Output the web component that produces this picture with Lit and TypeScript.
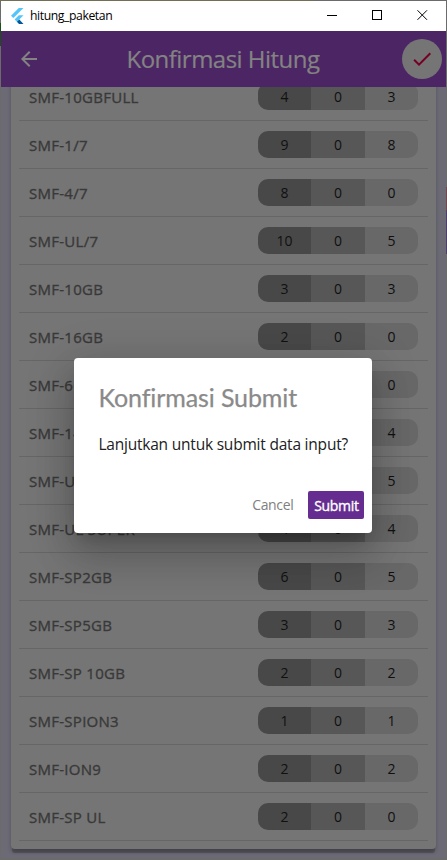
import { LitElement, html, css } from "lit";
import { customElement, property } from "lit/decorators.js";

type Item = [string, number, number, number];

const ITEMS: Item[] = [
  ["SMF-10GBFULL", 4, 0, 3],
  ["SMF-1/7", 9, 0, 8],
  ["SMF-4/7", 8, 0, 0],
  ["SMF-UL/7", 10, 0, 5],
  ["SMF-10GB", 3, 0, 3],
  ["SMF-16GB", 2, 0, 0],
  ["SMF-6GB", 2, 0, 0],
  ["SMF-14GB", 4, 0, 4],
  ["SMF-UL", 5, 0, 5],
  ["SMF-UL SUPER", 4, 0, 4],
  ["SMF-SP2GB", 6, 0, 5],
  ["SMF-SP5GB", 3, 0, 3],
  ["SMF-SP 10GB", 2, 0, 2],
  ["SMF-SPION3", 1, 0, 1],
  ["SMF-ION9", 2, 0, 2],
  ["SMF-SP UL", 2, 0, 0],
];

@customElement("window-bar")
class WindowBar extends LitElement {
  static styles = css`
    :host {
      display: flex;
      align-items: center;
      height: 30px;
      box-sizing: border-box;
      padding-left: 10px;
      background: #fff;
      color: #000;
      font: 12px/16px "Open Sans", "Noto Sans", sans-serif;
    }
    .logo { width: 13px; height: 16px; flex: none; margin-top: -1px; }
    .name { margin-left: 6px; flex: 1; letter-spacing: -0.4px; font-size: 12.2px; }
    .controls { display: flex; }
    .control { width: 45px; height: 30px; display: block; }
    .control.close { width: 46px; }
  `;
  render() {
    return html`
      <svg class="logo" viewBox="0 0 13 16">
        <path d="M7.8 0h4.700L2.400 10.100 0 7.800z" fill="#54c5f8" />
        <path d="M7.800 7.300h4.700L8.300 11.500l-2.400 2.300-2.300-2.300z" fill="#54c5f8" />
        <path d="M5.900 13.800 8.300 11.500l4.200 4.500H8z" fill="#01579b" />
      </svg>
      <span class="name">hitung_paketan</span>
      <div class="controls">
        <svg class="control" viewBox="0 0 45 30" shape-rendering="crispEdges"><path d="M17 14.500h10" stroke="#000" /></svg>
        <svg class="control" viewBox="0 0 45 30" shape-rendering="crispEdges"><path d="M17.500 9.500h9v9h-9z" fill="none" stroke="#000" /></svg>
        <svg class="control close" viewBox="0 0 46 30"><path d="M17.500 9.300l9.500 9.500M27 9.300l-9.500 9.500" stroke="#000" /></svg>
      </div>
    `;
  }
}

@customElement("app-header")
class AppHeader extends LitElement {
  static styles = css`
    :host {
      display: grid;
      grid-template-columns: 56px 1fr 49px;
      align-items: center;
      height: 56px;
      background: #4c2664;
      position: relative;
      z-index: 1;
    }
    .back { width: 24px; height: 24px; margin-left: 16px; }
    .title {
      text-align: center;
      color: #838383;
      font: 24px/32px "Open Sans", "Noto Sans", sans-serif;
      white-space: nowrap;
      padding-right: 8px;
    }
    .title span { letter-spacing: -0.52px; -webkit-text-stroke: 0.2px #838383; }
    .done {
      width: 40px;
      height: 40px;
      border-radius: 50%;
      background: #757575;
      display: flex;
      align-items: center;
      justify-content: center;
      margin-left: 5px;
    }
    .done svg { width: 24px; height: 24px; }
  `;
  render() {
    return html`
      <svg class="back" viewBox="0 0 24 24">
        <path fill="#838383" d="M20 11H7.830l5.590-5.590L12 4l-8 8 8 8 1.410-1.410L7.830 13H20v-2z" />
      </svg>
      <div class="title"><span>Konfirmasi Hitung</span></div>
      <div class="done">
        <svg viewBox="0 0 24 24"><path fill="#750024" d="M9 16.170 4.830 12l-1.420 1.410L9 19 21 7l-1.410-1.410z" /></svg>
      </div>
    `;
  }
}

@customElement("item-row")
class ItemRow extends LitElement {
  @property({ attribute: false }) item!: Item;
  static styles = css`
    :host {
      display: flex;
      align-items: center;
      justify-content: space-between;
      box-sizing: border-box;
      height: 48px;
      padding: 0 10px 0 10px;
      border-bottom: 1px solid #666;
      font-family: "Open Sans", "Noto Sans", sans-serif;
    }
    .label {
      font-size: 15px;
      letter-spacing: 0.27px;
      color: #393939;
      -webkit-text-stroke: 0.35px #393939;
      line-height: 20px;
    }
    .counts {
      display: grid;
      grid-template-columns: 53px 54px 53px;
      height: 27px;
      border-radius: 10px;
      overflow: hidden;
      font-size: 14px;
      line-height: 27px;
      text-align: center;
      color: #101010;
    }
    .a { background: #484848; }
    .b { background: #575757; }
    .c { background: #686868; }
  `;
  render() {
    const [label, a, b, c] = this.item;
    return html`
      <span class="label">${label}</span>
      <div class="counts"><span class="a">${a}</span><span class="b">${b}</span><span class="c">${c}</span></div>
    `;
  }
}

@customElement("confirm-dialog")
class ConfirmDialog extends LitElement {
  static styles = css`
    :host {
      display: flex;
      flex-direction: column;
      box-sizing: border-box;
      width: 298px;
      height: 175px;
      border-radius: 4px;
      background: #fff;
      padding: 23px 8px 14px 24px;
      box-shadow: 0 11px 15px -7px rgba(0, 0, 0, 0.2), 0 24px 38px 3px rgba(0, 0, 0, 0.14),
        0 9px 46px 8px rgba(0, 0, 0, 0.12);
      font-family: "Open Sans", "Noto Sans", sans-serif;
      white-space: nowrap;
    }
    .title { font: 25px/32px Lato, "Open Sans", sans-serif; color: #8a8a8a; letter-spacing: -0.1px; -webkit-text-stroke: 0.25px #8a8a8a; }
    .message { margin-top: 21px; font-size: 15.500px; letter-spacing: -0.21px; line-height: 20px; color: #212121; }
    .actions { margin-top: auto; display: flex; justify-content: flex-end; align-items: center; font-size: 14px; }
    .cancel { color: #808080; margin-right: 15px; letter-spacing: -0.35px; }
    .submit {
      width: 56px;
      height: 28px;
      border-radius: 2px;
      background: #662d91;
      color: #fff;
      text-align: center;
      line-height: 29px;
      letter-spacing: -0.3px;
      -webkit-text-stroke: 0.35px #fff;
    }
  `;
  render() {
    return html`
      <div class="title">Konfirmasi Submit</div>
      <div class="message">Lanjutkan untuk submit data input?</div>
      <div class="actions">
        <span class="cancel">Cancel</span>
        <span class="submit">Submit</span>
      </div>
    `;
  }
}

@customElement("app-root")
class AppRoot extends LitElement {
  static styles = css`
    :host {
      display: block;
      box-sizing: border-box;
      width: 447px;
      height: 860px;
      overflow: hidden;
      padding: 1px;
      position: relative;
      background: linear-gradient(#736f55, #736f55) 0 0 / 314px 1px no-repeat,
        linear-gradient(#185018, #185018) 0 23px / 1px 23px no-repeat,
        linear-gradient(#6e4a50, #6e4a50) 446px 187px / 1px 23px no-repeat,
        linear-gradient(#4c4068, #4c4068) 446px 210px / 1px 44px no-repeat, #6b6b6b;
    }
    .page {
      height: 771px;
      overflow: hidden;
      background: #6b6a75;
      padding: 0 10px;
    }
    .card {
      margin-top: -14px;
      height: 776px;
      box-sizing: border-box;
      padding: 0 8px;
      background: #757575;
      border-radius: 4px;
      box-shadow: 0 5px 1px -1px rgba(0, 0, 0, 0.22), 0 3px 4px rgba(0, 0, 0, 0.2);
    }
    .overlay { position: absolute; left: 74.400px; top: 357.500px; }
  `;
  render() {
    return html`
      <window-bar></window-bar>
      <app-header></app-header>
      <div class="page">
        <div class="card">${ITEMS.map((item) => html`<item-row .item=${item}></item-row>`)}</div>
      </div>
      <confirm-dialog class="overlay"></confirm-dialog>
    `;
  }
}
